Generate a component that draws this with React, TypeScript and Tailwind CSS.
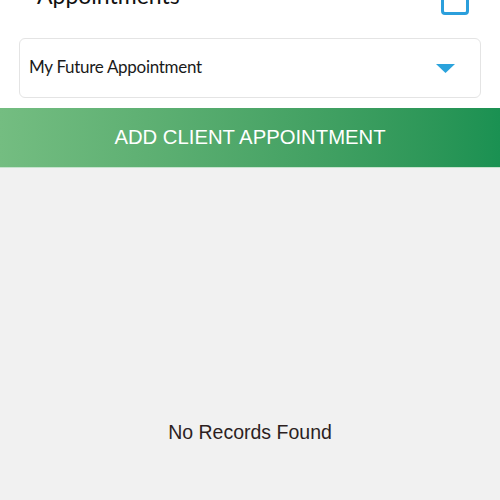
import React from 'react';

const App: React.FC = () => {
    return (
        <div className="w-[500px] h-[500px] overflow-hidden bg-white flex flex-col" style={{ fontFamily: 'Lato, "Noto Sans", sans-serif' }}>
            {/* header, scrolled so its top sits above the window */}
            <div className="h-[38px] relative">
                <div className="absolute left-[37px] top-[-19px] text-[23px] leading-[28px] text-[#111]">
                    Appointments
                </div>
                <div className="absolute left-[441px] top-[-14px] w-[28px] h-[29px] border-[3px] border-[#2b9fdc] rounded-[4px]" />
            </div>

            <div className="px-[19px]">
                <div className="h-[60px] border border-[#e4e4e4] rounded-[6px] flex items-center justify-between pl-[9px] pr-[25px]">
                    <span className="text-[17px] leading-[20px] mb-[3px] text-[#1a1a1a] tracking-[-0.3px]">My Future Appointment</span>
                    <svg width="19" height="9" viewBox="0 0 19 9">
                        <polygon points="0,0 19,0 9.5,9" fill="#2ba3dc" />
                    </svg>
                </div>
            </div>

            <div className="mt-[10px] h-[60px] flex items-center justify-center bg-gradient-to-r from-[#74bd81] to-[#1a9152] border-b border-[#c6e3cd]">
                <span className="text-white text-[20.3px]" style={{ fontFamily: '"Liberation Sans", Arial, sans-serif' }}>
                    ADD CLIENT APPOINTMENT
                </span>
            </div>

            <div className="flex-1 bg-[#f1f1f1] flex flex-col items-center">
                <div className="mt-[250px] text-[19.5px] text-[#2d1f1f]" style={{ fontFamily: '"Liberation Sans", Arial, sans-serif' }}>
                    No Records Found
                </div>
            </div>
        </div>
    );
};

export default App;
